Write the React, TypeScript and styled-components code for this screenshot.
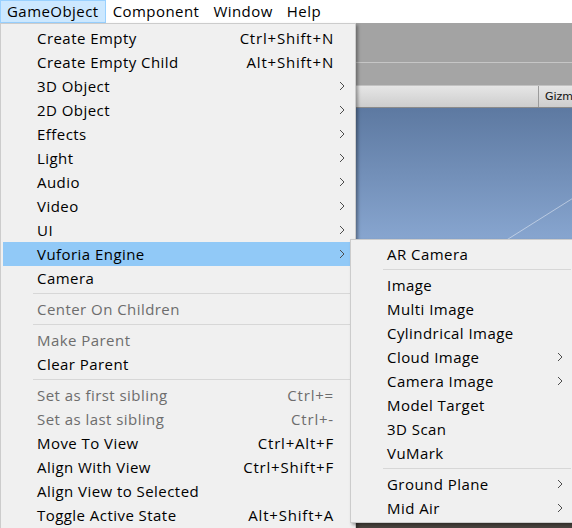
import React from "react";
import styled, { createGlobalStyle } from "styled-components";

const Global = createGlobalStyle`
  html, body { margin: 0; padding: 0; background: #ffffff; overflow: hidden; }
  body { font-family: "Open Sans", "Noto Sans", sans-serif; }
`;

const Page = styled.div`
  position: relative;
  width: 572px;
  height: 528px;
  overflow: hidden;
`;

const Stage = styled.div`
  width: 640px;
  display: flex;
  flex-direction: column;
`;

const MenuBar = styled.div`
  height: 23px;
  display: flex;
  align-items: stretch;
  background: #ffffff;
  font-size: 15px;
  letter-spacing: 0.45px;
  color: #000;
`;

const BarItem = styled.div<{ $open?: boolean }>`
  padding: 0 6px;
  border: 1px solid ${(p) => (p.$open ? "#99d1ff" : "transparent")};
  background: ${(p) => (p.$open ? "#cce8ff" : "transparent")};
  line-height: 20px;
  white-space: nowrap;
`;

const Toolbar = styled.div`
  height: 39px;
  background: #a3a3a3;
  border-bottom: 1px solid #c6c6c6;
`;

const SubToolbar = styled.div`
  height: 22px;
  background: #a5a5a5;
  border-bottom: 1px solid #c2c2c2;
`;

const SceneBar = styled.div`
  height: 21px;
  display: grid;
  grid-template-columns: 538px auto;
  background: linear-gradient(#e6e6e6, #cdcdcd);
  border-bottom: 1px solid #8a8a8a;
`;

const GizmoButton = styled.div`
  border-left: 1px solid #9b9b9b;
  padding-left: 6px;
  font-family: "DejaVu Sans", sans-serif;
  font-size: 11px;
  line-height: 21px;
  color: #111;
  white-space: nowrap;
`;

const Scene = styled.div`
  position: relative;
  height: 415px;
  background: linear-gradient(#5d79a1 0px, #88a6d0 133px, #9fb8da 415px);
  overflow: hidden;
`;

const GridLines = styled.svg`
  position: absolute;
  inset: 0;
`;

const BottomPanel = styled.div`
  height: 40px;
  background: #4a453f;
`;

const Menu = styled.div<{ $left: number; $top: number; $width: number }>`
  position: absolute;
  left: ${(p) => p.$left}px;
  top: ${(p) => p.$top}px;
  width: ${(p) => p.$width}px;
  box-sizing: border-box;
  padding: 2px;
  background: #f0f0f0;
  border: 1px solid #cccccc;
  box-shadow: 2px 2px 3px rgba(0, 0, 0, 0.35);
  font-size: 15px;
  letter-spacing: 0.45px;
`;

const Row = styled.div<{ $active?: boolean; $disabled?: boolean }>`
  height: 24px;
  display: grid;
  grid-template-columns: 1fr auto 19px;
  align-items: center;
  padding-left: 34px;
  line-height: 24px;
  white-space: nowrap;
  background: ${(p) => (p.$active ? "#91c9f7" : "transparent")};
  color: ${(p) => (p.$disabled ? "#6d6d6d" : "#000000")};
`;

const Shortcut = styled.span`
  text-align: right;
  letter-spacing: 0.8px;
`;

const ArrowCell = styled.span`
  display: flex;
  align-items: center;
  padding-left: 5px;
`;

const Separator = styled.div`
  height: 7px;
  display: flex;
  align-items: center;
  padding-left: 30px;
  &::after {
    content: "";
    flex: 1;
    height: 1px;
    background: #d7d7d7;
  }
`;

type Item =
  | { sep: true }
  | {
      sep?: false;
      label: string;
      sc?: string;
      sub?: boolean;
      disabled?: boolean;
      active?: boolean;
    };

const mainItems: Item[] = [
  { label: "Create Empty", sc: "Ctrl+Shift+N" },
  { label: "Create Empty Child", sc: "Alt+Shift+N" },
  { label: "3D Object", sub: true },
  { label: "2D Object", sub: true },
  { label: "Effects", sub: true },
  { label: "Light", sub: true },
  { label: "Audio", sub: true },
  { label: "Video", sub: true },
  { label: "UI", sub: true },
  { label: "Vuforia Engine", sub: true, active: true },
  { label: "Camera" },
  { sep: true },
  { label: "Center On Children", disabled: true },
  { sep: true },
  { label: "Make Parent", disabled: true },
  { label: "Clear Parent" },
  { sep: true },
  { label: "Set as first sibling", sc: "Ctrl+=", disabled: true },
  { label: "Set as last sibling", sc: "Ctrl+-", disabled: true },
  { label: "Move To View", sc: "Ctrl+Alt+F" },
  { label: "Align With View", sc: "Ctrl+Shift+F" },
  { label: "Align View to Selected" },
  { label: "Toggle Active State", sc: "Alt+Shift+A" },
];

const subItems: Item[] = [
  { label: "AR Camera" },
  { sep: true },
  { label: "Image" },
  { label: "Multi Image" },
  { label: "Cylindrical Image" },
  { label: "Cloud Image", sub: true },
  { label: "Camera Image", sub: true },
  { label: "Model Target" },
  { label: "3D Scan" },
  { label: "VuMark" },
  { sep: true },
  { label: "Ground Plane", sub: true },
  { label: "Mid Air", sub: true },
];

const Chevron = () => (
  <svg width="6" height="10" viewBox="0 0 6 10">
    <path d="M1 1 L5 5 L1 9" fill="none" stroke="#4d4d4d" strokeWidth="1" />
  </svg>
);

const MenuList = ({ items }: { items: Item[] }) => (
  <>
    {items.map((it, i) =>
      it.sep ? (
        <Separator key={i} />
      ) : (
        <Row key={i} $active={it.active} $disabled={it.disabled}>
          <span>{it.label}</span>
          <Shortcut>{it.sc ?? ""}</Shortcut>
          <ArrowCell>{it.sub ? <Chevron /> : null}</ArrowCell>
        </Row>
      )
    )}
  </>
);

export default function App() {
  return (
    <Page>
      <Global />
      <Stage>
        <MenuBar>
          <BarItem $open>GameObject</BarItem>
          <BarItem>Component</BarItem>
          <BarItem>Window</BarItem>
          <BarItem>Help</BarItem>
        </MenuBar>
        <Toolbar />
        <SubToolbar />
        <SceneBar>
          <span />
          <GizmoButton>Gizm</GizmoButton>
        </SceneBar>
        <Scene>
          <GridLines width="640" height="415" viewBox="0 0 640 415">
            <line x1="300" y1="262" x2="640" y2="48" stroke="rgba(255,255,255,0.45)" strokeWidth="1" />
            <line x1="420" y1="262" x2="640" y2="112" stroke="rgba(255,255,255,0.45)" strokeWidth="1" />
          </GridLines>
        </Scene>
        <BottomPanel />
      </Stage>
      <Menu $left={0} $top={23} $width={356}>
        <MenuList items={mainItems} />
      </Menu>
      <Menu $left={350} $top={239} $width={224}>
        <MenuList items={subItems} />
      </Menu>
    </Page>
  );
}
